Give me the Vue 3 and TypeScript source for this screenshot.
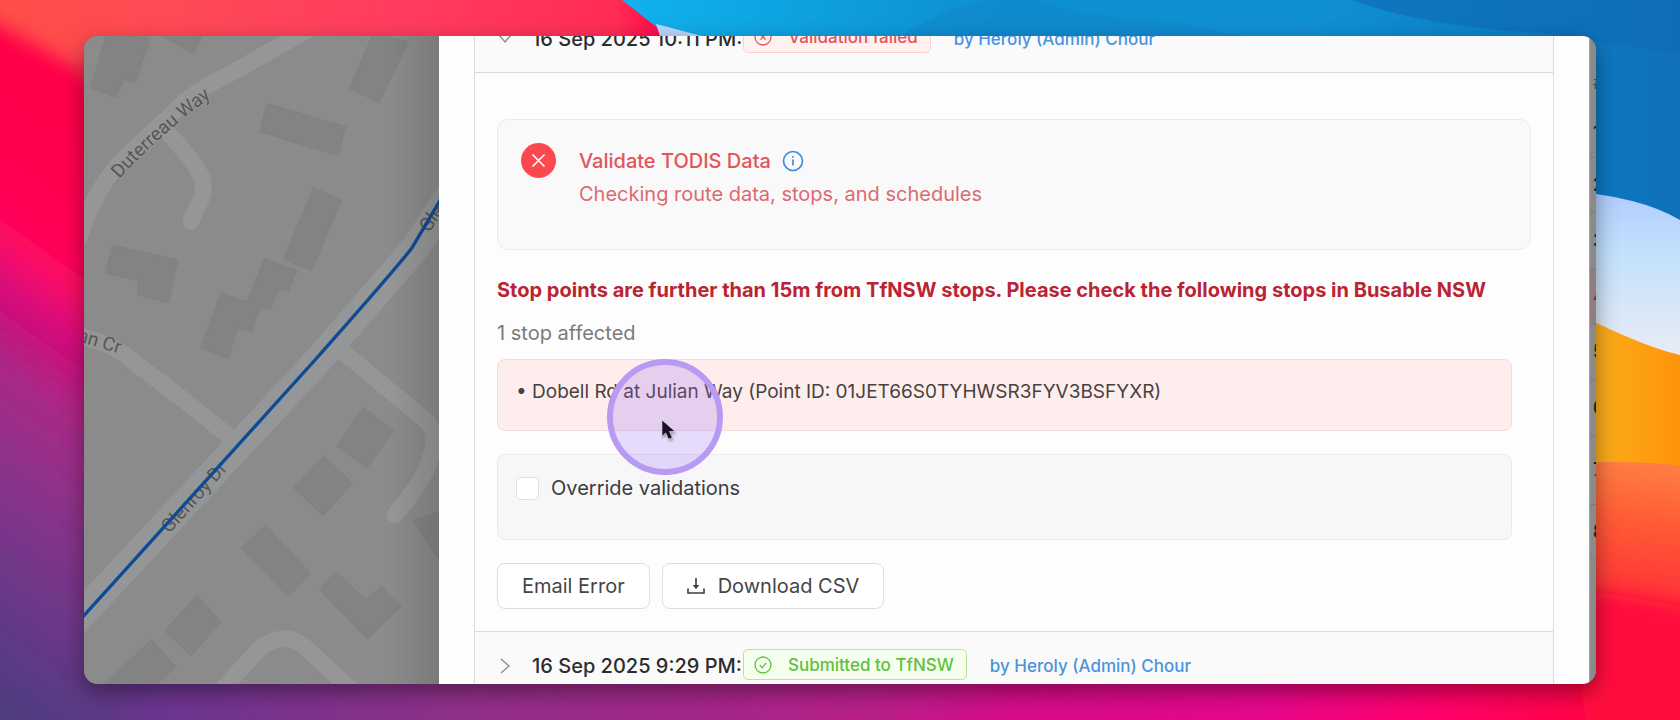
<script setup lang="ts">
import { ref } from 'vue'

interface StripRow {
  label: string
  height: number
  kind?: 'head' | 'active'
}

const overrideValidations = ref(false)
const failedOpen = ref(true)

const affectedStops: string[] = ['Dobell Rd at Julian Way (Point ID: 01JET66S0TYHWSR3FYV3BSFYXR)']

const stripRows: StripRow[] = [
  { label: '#', height: 50, kind: 'head' },
  { label: '1', height: 50 },
  { label: '2', height: 55 },
  { label: '3', height: 56 },
  { label: '4', height: 56, kind: 'active' },
  { label: '5', height: 55 },
  { label: '6', height: 56 },
  { label: '7', height: 69 },
  { label: '8', height: 54 },
]
</script>

<template>
  <div class="stage">
    <svg class="wallpaper" viewBox="0 0 1680 720" preserveAspectRatio="none" aria-hidden="true">
      <defs>
        <linearGradient id="wpBottom" x1="0" y1="0" x2="1" y2="0">
          <stop offset="0" stop-color="#4f3d80" />
          <stop offset="0.1" stop-color="#6c3590" />
          <stop offset="0.27" stop-color="#8f3088" />
          <stop offset="0.42" stop-color="#a52688" />
          <stop offset="0.52" stop-color="#b82088" />
          <stop offset="0.6" stop-color="#d50c88" />
          <stop offset="0.75" stop-color="#e5078a" />
          <stop offset="0.85" stop-color="#ff006c" />
          <stop offset="0.95" stop-color="#ff0545" />
          <stop offset="1" stop-color="#ff083c" />
        </linearGradient>
        <linearGradient id="wpTop" x1="0" y1="0" x2="670" y2="0" gradientUnits="userSpaceOnUse">
          <stop offset="0" stop-color="#ff4d47" />
          <stop offset="0.25" stop-color="#ff4a55" />
          <stop offset="0.6" stop-color="#ff3c60" />
          <stop offset="0.92" stop-color="#ff2c55" />
          <stop offset="1" stop-color="#ff0048" />
        </linearGradient>
        <linearGradient id="wpBlue" x1="620" y1="0" x2="1680" y2="0" gradientUnits="userSpaceOnUse">
          <stop offset="0" stop-color="#10b2ee" />
          <stop offset="0.35" stop-color="#0d90d2" />
          <stop offset="0.65" stop-color="#1090d4" />
          <stop offset="0.85" stop-color="#0c80c6" />
          <stop offset="1" stop-color="#0f70b8" />
        </linearGradient>
        <linearGradient id="wpIce" x1="0" y1="195" x2="0" y2="350" gradientUnits="userSpaceOnUse">
          <stop offset="0" stop-color="#b2cdff" />
          <stop offset="0.4" stop-color="#c4e2fc" />
          <stop offset="1" stop-color="#e6ebf6" />
        </linearGradient>
        <linearGradient id="wpOrange" x1="1596" y1="0" x2="1680" y2="0" gradientUnits="userSpaceOnUse">
          <stop offset="0" stop-color="#fbae1a" />
          <stop offset="1" stop-color="#ff930a" />
        </linearGradient>
        <linearGradient id="wpCoral" x1="1600" y1="462" x2="1585" y2="620" gradientUnits="userSpaceOnUse">
          <stop offset="0" stop-color="#ff7c42" />
          <stop offset="0.35" stop-color="#ff5c35" />
          <stop offset="0.85" stop-color="#ff3038" />
          <stop offset="1" stop-color="#ff083a" />
        </linearGradient>
        <linearGradient id="wpLeft" x1="0" y1="0" x2="-348" y2="486" gradientUnits="userSpaceOnUse">
          <stop offset="0" stop-color="#ff0046" />
          <stop offset="0.28" stop-color="#ff0055" />
          <stop offset="0.325" stop-color="#fa1068" />
          <stop offset="0.385" stop-color="#d8057a" />
          <stop offset="0.5" stop-color="#a82a86" />
          <stop offset="0.68" stop-color="#80358a" />
          <stop offset="0.88" stop-color="#5b3a85" />
          <stop offset="1" stop-color="#4a3d7c" />
        </linearGradient>
        <filter id="wpSoft" x="-20%" y="-20%" width="140%" height="140%"><feGaussianBlur stdDeviation="9" /></filter>
      </defs>
      <rect width="1680" height="720" fill="url(#wpBottom)" />
      <path d="M-60-60H120V800H-60z" fill="url(#wpLeft)" filter="url(#wpSoft)" />
      <path d="M-60-60H700V200H160L84 72 0 26-60-6z" fill="url(#wpTop)" filter="url(#wpSoft)" />
      <path d="M150 0H640L680 60H150z" fill="url(#wpTop)" />
      <path d="M622 0H1680V240L1200 300 740 100 668 36z" fill="url(#wpBlue)" />
      <path d="M656 24L702 36V60H668z" fill="#bcd4fb" />
      <path d="M1040 0Q1074 14 1120 17Q1180 22 1240 36H900Q960 0 1000 0z" fill="#1383c8" opacity=".4" />
      <path d="M1352 0Q1420 26 1540 33L1680 54V0z" fill="#0f6cb8" opacity=".7" />
      <path d="M1560 190Q1640 196 1680 220V390H1560z" fill="url(#wpIce)" />
      <path d="M1560 305Q1640 346 1680 355V490H1560z" fill="url(#wpOrange)" />
      <path d="M1560 463Q1640 460 1680 466V640H1560z" fill="url(#wpCoral)" />
      <path d="M1570 590Q1640 594 1740 622V760H1590z" fill="#ff083c" filter="url(#wpSoft)" />
    </svg>

    <div class="window">
      <div class="map">
        <svg viewBox="252 108 1065 1944" preserveAspectRatio="xMidYMid slice" role="img" aria-label="Route map">
          <defs>
            <path id="lblDuterreau" d="M358 537Q474 408 654 276" />
          </defs>
          <g class="roads">
            <path d="M930 85L720 205Q600 265 560 300L420 430Q340 500 300 570T240 710" />
            <path d="M500 395Q560 460 580 490Q628 550 600 605L572 665" />
            <path d="M200 1000Q340 1025 400 1085L545 1195 720 1335" />
            <path d="M1010 1040L1270 1255Q1320 1290 1290 1375Q1280 1430 1185 1545" />
            <path d="M660 2075L780 1945Q860 1885 925 1950L1060 2075" />
            <path class="main" d="M1360 570L1245 745 955 1080 220 1870" />
          </g>
          <g class="buildings">
            <path d="M320 100L450 115 405 250 370 240 348 292 272 265z" />
            <path d="M470 100H610L580 160z" />
            <path d="M1120 100L1225 125 1138 308 1048 265z" />
            <path d="M800 310L1037 380 1015 468 778 395z" />
            <path d="M940 563L1025 600 935 812 850 778z" />
            <path d="M793 775L890 812 868 872 835 868 812 930 780 920 755 995 712 985 685 1075 602 1045 662 878 742 905z" />
            <path d="M338 735L535 780 505 908 412 885 415 842 316 820z" />
            <path d="M1090 1222L1182 1292 1100 1405 1010 1338z" />
            <path d="M970 1367L1058 1450 970 1547 880 1463z" />
            <path d="M797 1575L932 1720 865 1790 724 1645z" />
            <path d="M1008 1715L1098 1800 1145 1757 1205 1818 1102 1917 957 1767z" />
            <path d="M590 1787L664 1865 573 1967 493 1892z" />
            <path d="M455 1920L527 2000 460 2065 290 2070z" />
            <path d="M1240 1560L1320 1535V1680L1300 1660z" />
          </g>
          <g class="labels">
            <text><textPath href="#lblDuterreau">Duterreau Way</textPath></text>
            <text transform="translate(508 1602) rotate(-48)">Glenroy Dr</text>
            <text transform="translate(1286 700) rotate(-55)">Glenroy Dr</text>
            <text transform="translate(230 1022) rotate(17)">an Cr</text>
          </g>
          <path class="route" d="M1330 585L1235 745Q1180 815 945 1080L240 1860" />
        </svg>
      </div>

      <main class="drawer">
        <div class="collapse">
          <section>
            <header class="entry-head entry-head-first">
              <button class="toggle" type="button" aria-label="Toggle failed validation" :aria-expanded="failedOpen" @click="failedOpen = !failedOpen">
                <svg viewBox="0 0 16 16"><path d="M2 4l6 7 6-7" /></svg>
              </button>
              <span class="stamp">16 Sep 2025 10:11 PM:</span>
              <span class="tag tag-error">
                <svg viewBox="0 0 18 18"><circle cx="9" cy="9" r="8" /><path d="M6.4 6.4l5.2 5.2M11.6 6.4l-5.2 5.2" /></svg>
                Validation failed
              </span>
              <a class="author" href="#">by Heroly (Admin) Chour</a>
            </header>

            <div v-show="failedOpen" class="entry-body">
              <div class="check-card">
                <span class="check-mark">
                  <svg viewBox="0 0 35 35"><path d="M11.5 11.5l12 12M23.5 11.5l-12 12" /></svg>
                </span>
                <div>
                  <h2 class="check-title">
                    Validate TODIS Data
                    <svg viewBox="0 0 22 22" role="img" aria-label="More information">
                      <circle cx="11" cy="11" r="9.5" />
                      <path d="M11 9.6v6M11 6v1.8" />
                    </svg>
                  </h2>
                  <p class="check-text">Checking route data, stops, and schedules</p>
                </div>
              </div>

              <div class="result">
                <h3 class="result-title">Stop points are further than 15m from TfNSW stops. Please check the following stops in Busable NSW</h3>
                <p class="result-count">1 stop affected</p>
                <ul class="stops">
                  <li v-for="stop in affectedStops" :key="stop">{{ stop }}</li>
                </ul>
                <div class="override">
                  <label><input v-model="overrideValidations" type="checkbox" />Override validations</label>
                </div>
                <div class="actions">
                  <button class="btn" type="button">Email Error</button>
                  <button class="btn" type="button">
                    <svg viewBox="0 0 18 18"><path d="M9 1v10M1 11.5V16h16v-4.5" /><path class="solid" d="M5.8 8h6.4L9 12.2z" /></svg>
                    Download CSV
                  </button>
                </div>
              </div>
            </div>
          </section>

          <section>
            <header class="entry-head">
              <button class="toggle" type="button" aria-label="Toggle submitted entry" aria-expanded="false">
                <svg viewBox="0 0 16 16"><path d="M4 1l8 7-8 7" /></svg>
              </button>
              <span class="stamp">16 Sep 2025 9:29 PM:</span>
              <span class="tag tag-success">
                <svg viewBox="0 0 18 18"><circle cx="9" cy="9" r="8" /><path d="M5.8 9l2.4 2.8 4-5" /></svg>
                Submitted to TfNSW
              </span>
              <a class="author" href="#">by Heroly (Admin) Chour</a>
            </header>
          </section>
        </div>
        <div class="pointer">
          <svg viewBox="0 0 18 24"><path d="M1 1V18.500L5 14.800 8 21.500 12 19.700 9 13.300H15z" /></svg>
        </div>
      </main>

      <div class="strip">
        <div
          v-for="row in stripRows"
          :key="row.label"
          class="strip-row"
          :class="row.kind"
          :style="{ height: row.height + 'px' }"
        >{{ row.label }}</div>
      </div>
    </div>
  </div>
</template>

<style>
body {
  margin: 0;
}
</style>

<style scoped>
* {
  box-sizing: border-box;
}

.stage {
  position: relative;
  display: flex;
  height: 100vh;
  padding: 36px 84px;
  overflow: hidden;
  font-family: Inter, "Liberation Sans", sans-serif;
  font-size: 20px;
  line-height: 24px;
  color: #3c3c3e;
}

.wallpaper {
  position: absolute;
  inset: 0;
  width: 100%;
  height: 100%;
}

.window {
  position: relative;
  flex: 1;
  display: grid;
  grid-template-columns: minmax(0, 355fr) minmax(0, 1150fr) 7px;
  overflow: hidden;
  border-radius: 14px;
  background: #8a8a8a;
  box-shadow: 0 8px 22px rgba(0, 0, 0, 0.4);
}

.map {
  position: relative;
  overflow: hidden;
  background: #8b8b8b;
}

.map svg {
  display: block;
  width: 100%;
  height: 100%;
}

.map::after {
  content: "";
  position: absolute;
  inset: 0 0 0 auto;
  width: 50px;
  background: linear-gradient(to right, transparent, rgba(0, 0, 0, 0.12));
}

.roads path {
  fill: none;
  stroke: #969696;
  stroke-width: 50;
  stroke-linecap: round;
}

.roads .main {
  stroke: #949697;
  stroke-width: 86;
}

.buildings path {
  fill: #838383;
  stroke: #7e7e7e;
  stroke-width: 2;
}

.labels text {
  font-family: Roboto, sans-serif;
  font-size: 57px;
  fill: #565656;
  stroke: #969696;
  stroke-width: 6;
  paint-order: stroke;
}

.route {
  fill: none;
  stroke: #0f4a94;
  stroke-width: 10;
}

.drawer {
  position: relative;
  min-width: 0;
  padding: 0 35px;
  overflow: hidden;
  background: #fdfdfd;
}

.collapse {
  margin-top: -32px;
  border: 1px solid #dedede;
}

.entry-head {
  display: flex;
  align-items: center;
  height: 68px;
  padding: 0 22px;
  background: #fafafa;
}

.entry-head-first {
  border-bottom: 1px solid #d9d9d9;
}

.toggle {
  display: grid;
  width: 16px;
  margin-right: 19px;
  padding: 0;
  border: 0;
  background: none;
}

.toggle svg {
  width: 16px;
  fill: none;
  stroke: #8c8c8c;
  stroke-width: 1.4;
}

.stamp {
  font-weight: 500;
  color: #2c2c2e;
}

.tag {
  display: flex;
  align-items: center;
  gap: 16px;
  height: 31px;
  margin: 0 23px 3px 1px;
  padding: 0 12px 0 10px;
  border: 1px solid;
  border-radius: 5px;
  font-size: 17px;
  font-weight: 500;
}

.tag svg {
  width: 18px;
  fill: none;
  stroke: currentColor;
  stroke-width: 1.3;
}

.tag-error {
  border-color: #fbcfcd;
  background: #fff1f0;
  color: #e2555b;
}

.tag-success {
  border-color: #b9e3a0;
  background: #f6ffed;
  color: #62c043;
}

.author {
  font-size: 17px;
  font-weight: 500;
  color: #4a94dc;
  text-decoration: none;
}

.entry-body {
  padding: 46px 22px 22px;
  border-bottom: 1px solid #dedede;
}

.check-card {
  display: flex;
  gap: 23px;
  min-height: 131px;
  padding: 23px;
  border: 1px solid #ebebeb;
  border-radius: 11px;
  background: #f9f9f9;
}

.check-mark {
  width: 35px;
  height: 35px;
  border-radius: 50%;
  background: #fb4a4f;
}

.check-mark svg {
  display: block;
  fill: none;
  stroke: #fff;
  stroke-width: 1.6;
}

.check-title {
  display: flex;
  align-items: center;
  gap: 11px;
  margin: 6px 0 9px;
  font-size: 20px;
  font-weight: 500;
  line-height: 24px;
  color: #e2555b;
}

.check-title svg {
  width: 22px;
  fill: none;
  stroke: #3d8fe6;
  stroke-width: 1.7;
}

.check-text {
  margin: 0;
  color: #dc6a72;
}

.result {
  padding: 28px 19px 0 0;
}

.result-title {
  margin: 0 0 19px;
  font-size: 20px;
  font-weight: 700;
  line-height: 24px;
  white-space: nowrap;
  color: #ba2432;
}

.result-count {
  margin: 0 0 14px;
  color: #7a7a7a;
}

.stops {
  min-height: 72px;
  margin: 0 0 23px;
  padding: 20px 18px;
  border: 1px solid #f2dcdb;
  border-radius: 8px;
  background: #fdeeed;
  list-style: none;
  font-size: 19px;
  color: #4a4041;
}

.stops li::before {
  content: "• ";
}

.override {
  min-height: 86px;
  padding: 21px 18px;
  border: 1px solid #ebebed;
  border-radius: 8px;
  background: #f7f7f9;
}

.override label {
  display: inline-flex;
  align-items: center;
  gap: 12px;
}

.override input {
  appearance: none;
  width: 23px;
  height: 23px;
  margin: 0;
  border: 1px solid #e0e0e2;
  border-radius: 5px;
  background: #fff;
}

.override input:checked {
  border-color: #3d8fe6;
  background: #3d8fe6;
}

.actions {
  display: flex;
  gap: 12px;
  margin-top: 23px;
}

.btn {
  display: flex;
  align-items: center;
  gap: 13px;
  height: 46px;
  padding: 0 24px;
  border: 1px solid #dedede;
  border-radius: 8px;
  background: #fff;
  font: inherit;
  color: #454547;
}

.btn svg {
  width: 18px;
  fill: none;
  stroke: #3c3c3e;
  stroke-width: 1.6;
}

.btn .solid {
  fill: #3c3c3e;
  stroke: none;
}

.pointer {
  position: absolute;
  left: 168px;
  top: 323px;
  width: 116px;
  height: 116px;
  border: 6px solid #b79af2;
  border-radius: 50%;
  background: rgba(150, 100, 240, 0.22);
}

.pointer svg {
  position: absolute;
  left: 48px;
  top: 54px;
  width: 17px;
  fill: #1c1028;
  stroke: rgba(255, 255, 255, 0.6);
  filter: drop-shadow(1px 2px 1px rgba(0, 0, 0, 0.3));
}

.strip {
  padding-top: 22px;
  overflow: hidden;
  background: #8a8a8a;
  border-left: 1px solid #a4a4a4;
  font-size: 18px;
}

.strip-row {
  display: flex;
  align-items: center;
  padding-left: 3px;
  border-bottom: 1px solid #7c7c7c;
  font-weight: 600;
  color: #1e1e1e;
}

.strip-row.head {
  border-bottom: 0;
  font-weight: 400;
  color: #444;
}

.strip-row.active {
  background: #8f7f7f;
  color: #a81e24;
}
</style>
